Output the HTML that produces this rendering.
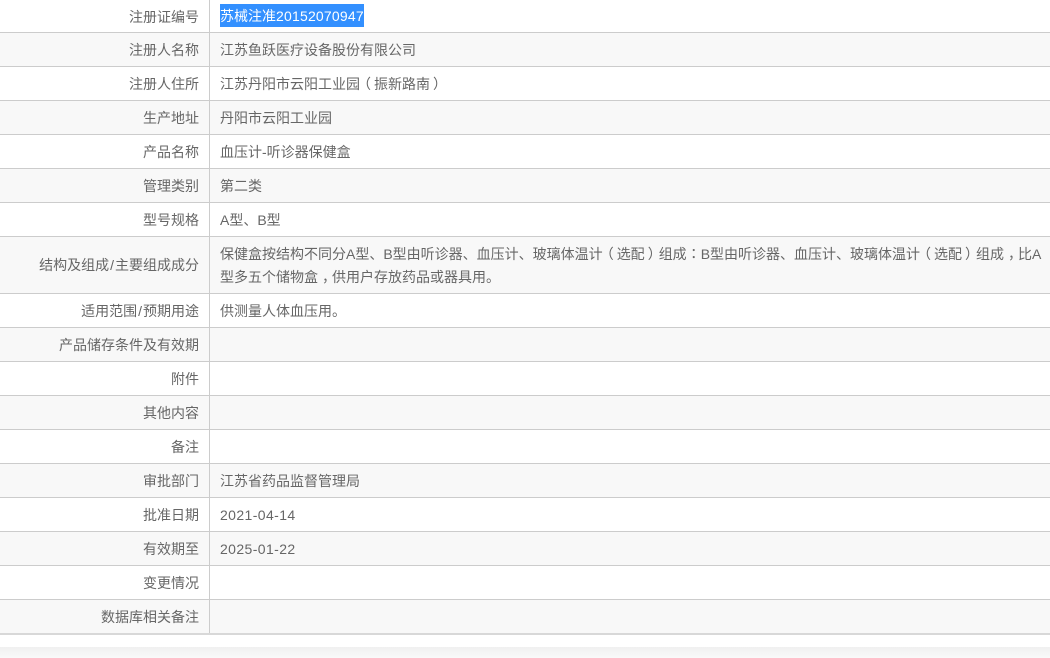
<!DOCTYPE html>
<html lang="zh">
<head>
<meta charset="utf-8">
<title>注册信息</title>
<style>
html,body{margin:0;padding:0;background:#fff;}
body{width:1050px;height:658px;overflow:hidden;position:relative;font-family:"Liberation Sans","Noto Sans CJK SC",sans-serif;font-size:14px;color:#666;}
.r{position:absolute;left:0;width:1050px;box-sizing:border-box;border-bottom:1px solid #ccc;}
.g{background:#f8f8f8;}
.l{position:absolute;left:0;top:0;bottom:0;width:210px;box-sizing:border-box;border-right:1px solid #ccc;padding-right:10px;text-align:right;line-height:35px;white-space:nowrap;}
.v{position:absolute;left:220px;top:0;line-height:35px;white-space:nowrap;}
.m{top:6px;line-height:23px;width:830px;white-space:normal;}
.n{letter-spacing:.4px;}
.s{margin:0 1px;}
.a{position:relative;left:-3px;}
.z{position:relative;left:3px;}
.q{position:relative;left:4px;}
.c{font-family:"Noto Sans CJK TC",sans-serif;}
.sel{position:absolute;left:220px;top:4px;height:23px;line-height:25px;background:#3390ff;color:#fff;white-space:nowrap;}
.sel span{letter-spacing:.2px;}
.b{position:absolute;left:0;top:647px;width:1050px;height:11px;background:linear-gradient(#f0f0f0,#f9f9f9);}
</style>
</head>
<body>
<div class="r" style="top:0;height:33px"><div class="l">注册证编号</div><div class="sel">苏械注准<span>20152070947</span></div></div>
<div class="r g" style="top:33px;height:34px"><div class="l">注册人名称</div><div class="v">江苏鱼跃医疗设备股份有限公司</div></div>
<div class="r" style="top:67px;height:34px"><div class="l">注册人住所</div><div class="v">江苏丹阳市云阳工业园<span class="a">（</span>振新路南<span class="z">）</span></div></div>
<div class="r g" style="top:101px;height:34px"><div class="l">生产地址</div><div class="v">丹阳市云阳工业园</div></div>
<div class="r" style="top:135px;height:34px"><div class="l">产品名称</div><div class="v">血压计-听诊器保健盒</div></div>
<div class="r g" style="top:169px;height:34px"><div class="l">管理类别</div><div class="v">第二类</div></div>
<div class="r" style="top:203px;height:34px"><div class="l">型号规格</div><div class="v">A型、B型</div></div>
<div class="r g" style="top:237px;height:57px"><div class="l" style="line-height:56px">结构及组成<span class="s">/</span>主要组成成分</div><div class="v m">保健盒按结构不同分A型、B型由听诊器、血压计、玻璃体温计<span class="a">（</span>选配<span class="z">）</span>组成<span class="c" lang="zh-Hant">：</span>B型由听诊器、血压计、玻璃体温计<span class="a">（</span>选配<span class="z">）</span>组成<span class="q">，</span>比A型多五个储物盒<span class="q">，</span>供用户存放药品或器具用。</div></div>
<div class="r" style="top:294px;height:34px"><div class="l">适用范围<span class="s">/</span>预期用途</div><div class="v">供测量人体血压用。</div></div>
<div class="r g" style="top:328px;height:34px"><div class="l">产品储存条件及有效期</div></div>
<div class="r" style="top:362px;height:34px"><div class="l">附件</div></div>
<div class="r g" style="top:396px;height:34px"><div class="l">其他内容</div></div>
<div class="r" style="top:430px;height:34px"><div class="l">备注</div></div>
<div class="r g" style="top:464px;height:34px"><div class="l">审批部门</div><div class="v">江苏省药品监督管理局</div></div>
<div class="r" style="top:498px;height:34px"><div class="l">批准日期</div><div class="v n">2021-04-14</div></div>
<div class="r g" style="top:532px;height:34px"><div class="l">有效期至</div><div class="v n">2025-01-22</div></div>
<div class="r" style="top:566px;height:34px"><div class="l">变更情况</div></div>
<div class="r g" style="top:600px;height:35px;border-bottom:2px solid #d8d8d8"><div class="l">数据库相关备注</div></div>
<div class="b"></div>
</body>
</html>
